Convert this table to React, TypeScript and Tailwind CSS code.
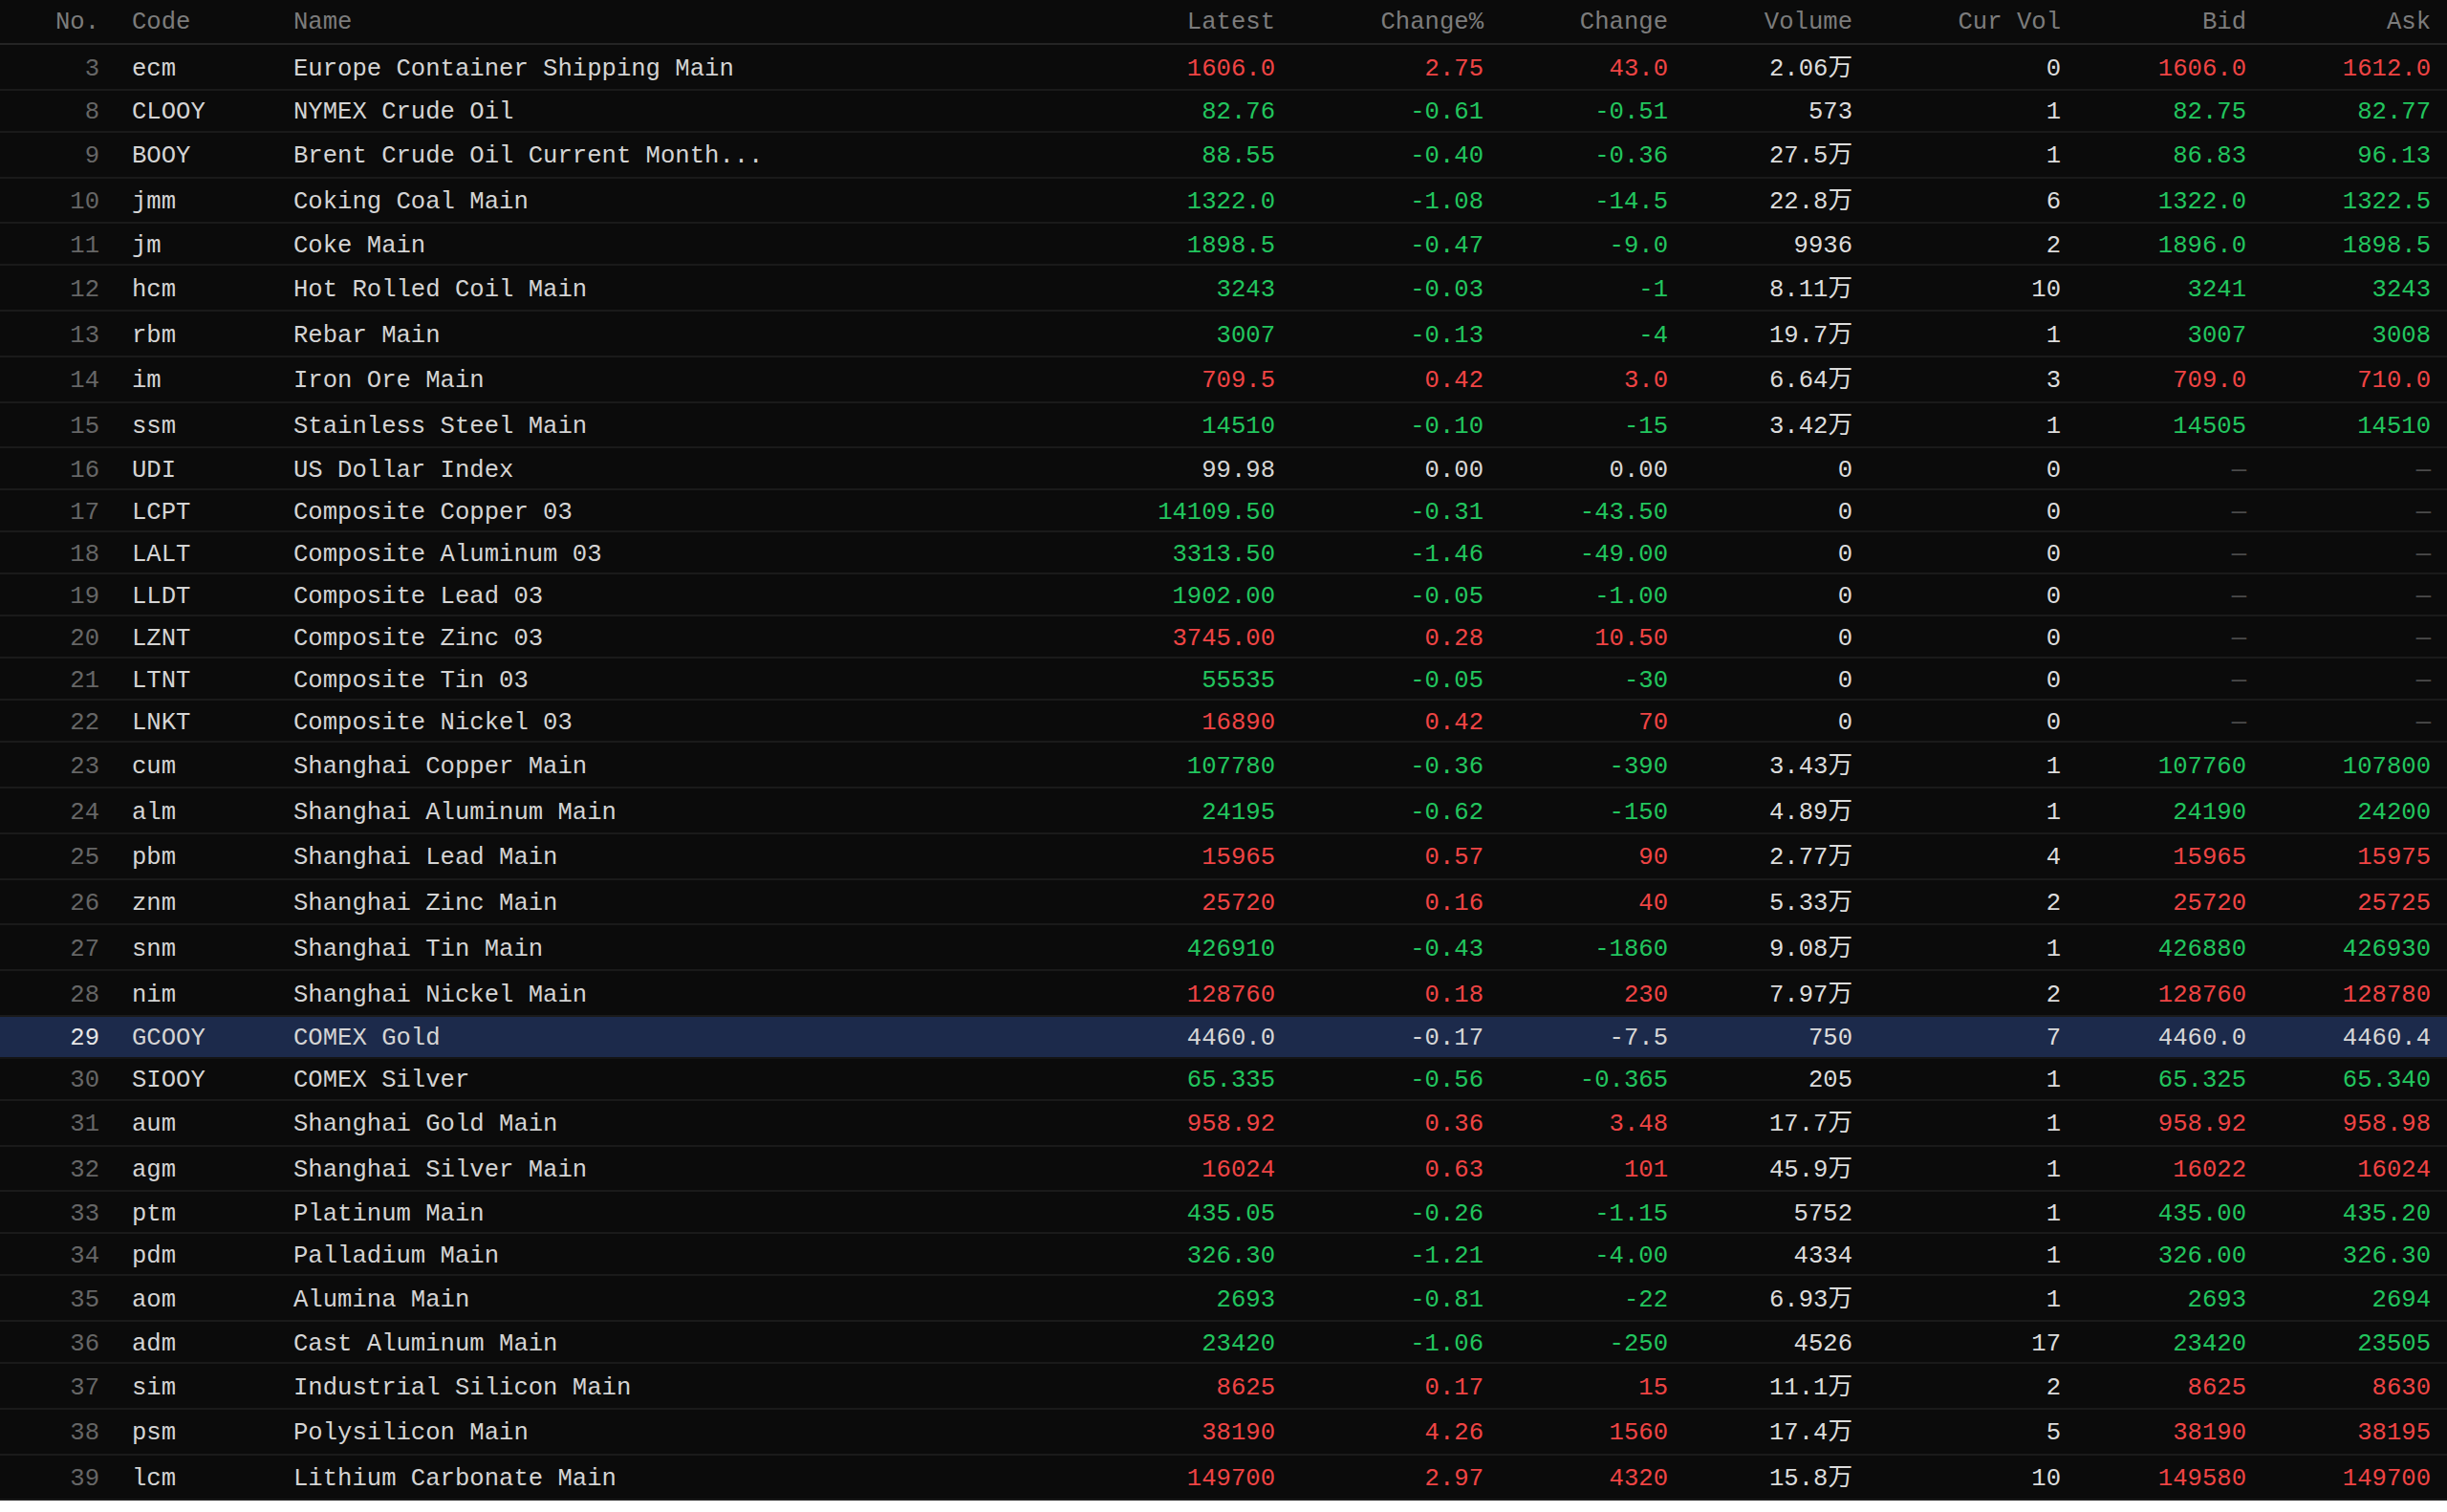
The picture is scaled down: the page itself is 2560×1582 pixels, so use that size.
import React from "react";

type Row = {
  no: number;
  code: string;
  name: string;
  latest: string;
  pct: string;
  chg: string;
  vol: string;
  cur: string;
  bid: string;
  ask: string;
  dir: "up" | "down" | "flat";
};

const rows: Row[] = [
  { no: 3, code: "ecm", name: "Europe Container Shipping Main", latest: "1606.0", pct: "2.75", chg: "43.0", vol: "2.06万", cur: "0", bid: "1606.0", ask: "1612.0", dir: "up" },
  { no: 8, code: "CLOOY", name: "NYMEX Crude Oil", latest: "82.76", pct: "-0.61", chg: "-0.51", vol: "573", cur: "1", bid: "82.75", ask: "82.77", dir: "down" },
  { no: 9, code: "BOOY", name: "Brent Crude Oil Current Month...", latest: "88.55", pct: "-0.40", chg: "-0.36", vol: "27.5万", cur: "1", bid: "86.83", ask: "96.13", dir: "down" },
  { no: 10, code: "jmm", name: "Coking Coal Main", latest: "1322.0", pct: "-1.08", chg: "-14.5", vol: "22.8万", cur: "6", bid: "1322.0", ask: "1322.5", dir: "down" },
  { no: 11, code: "jm", name: "Coke Main", latest: "1898.5", pct: "-0.47", chg: "-9.0", vol: "9936", cur: "2", bid: "1896.0", ask: "1898.5", dir: "down" },
  { no: 12, code: "hcm", name: "Hot Rolled Coil Main", latest: "3243", pct: "-0.03", chg: "-1", vol: "8.11万", cur: "10", bid: "3241", ask: "3243", dir: "down" },
  { no: 13, code: "rbm", name: "Rebar Main", latest: "3007", pct: "-0.13", chg: "-4", vol: "19.7万", cur: "1", bid: "3007", ask: "3008", dir: "down" },
  { no: 14, code: "im", name: "Iron Ore Main", latest: "709.5", pct: "0.42", chg: "3.0", vol: "6.64万", cur: "3", bid: "709.0", ask: "710.0", dir: "up" },
  { no: 15, code: "ssm", name: "Stainless Steel Main", latest: "14510", pct: "-0.10", chg: "-15", vol: "3.42万", cur: "1", bid: "14505", ask: "14510", dir: "down" },
  { no: 16, code: "UDI", name: "US Dollar Index", latest: "99.98", pct: "0.00", chg: "0.00", vol: "0", cur: "0", bid: "—", ask: "—", dir: "flat" },
  { no: 17, code: "LCPT", name: "Composite Copper 03", latest: "14109.50", pct: "-0.31", chg: "-43.50", vol: "0", cur: "0", bid: "—", ask: "—", dir: "down" },
  { no: 18, code: "LALT", name: "Composite Aluminum 03", latest: "3313.50", pct: "-1.46", chg: "-49.00", vol: "0", cur: "0", bid: "—", ask: "—", dir: "down" },
  { no: 19, code: "LLDT", name: "Composite Lead 03", latest: "1902.00", pct: "-0.05", chg: "-1.00", vol: "0", cur: "0", bid: "—", ask: "—", dir: "down" },
  { no: 20, code: "LZNT", name: "Composite Zinc 03", latest: "3745.00", pct: "0.28", chg: "10.50", vol: "0", cur: "0", bid: "—", ask: "—", dir: "up" },
  { no: 21, code: "LTNT", name: "Composite Tin 03", latest: "55535", pct: "-0.05", chg: "-30", vol: "0", cur: "0", bid: "—", ask: "—", dir: "down" },
  { no: 22, code: "LNKT", name: "Composite Nickel 03", latest: "16890", pct: "0.42", chg: "70", vol: "0", cur: "0", bid: "—", ask: "—", dir: "up" },
  { no: 23, code: "cum", name: "Shanghai Copper Main", latest: "107780", pct: "-0.36", chg: "-390", vol: "3.43万", cur: "1", bid: "107760", ask: "107800", dir: "down" },
  { no: 24, code: "alm", name: "Shanghai Aluminum Main", latest: "24195", pct: "-0.62", chg: "-150", vol: "4.89万", cur: "1", bid: "24190", ask: "24200", dir: "down" },
  { no: 25, code: "pbm", name: "Shanghai Lead Main", latest: "15965", pct: "0.57", chg: "90", vol: "2.77万", cur: "4", bid: "15965", ask: "15975", dir: "up" },
  { no: 26, code: "znm", name: "Shanghai Zinc Main", latest: "25720", pct: "0.16", chg: "40", vol: "5.33万", cur: "2", bid: "25720", ask: "25725", dir: "up" },
  { no: 27, code: "snm", name: "Shanghai Tin Main", latest: "426910", pct: "-0.43", chg: "-1860", vol: "9.08万", cur: "1", bid: "426880", ask: "426930", dir: "down" },
  { no: 28, code: "nim", name: "Shanghai Nickel Main", latest: "128760", pct: "0.18", chg: "230", vol: "7.97万", cur: "2", bid: "128760", ask: "128780", dir: "up" },
  { no: 29, code: "GCOOY", name: "COMEX Gold", latest: "4460.0", pct: "-0.17", chg: "-7.5", vol: "750", cur: "7", bid: "4460.0", ask: "4460.4", dir: "flat" },
  { no: 30, code: "SIOOY", name: "COMEX Silver", latest: "65.335", pct: "-0.56", chg: "-0.365", vol: "205", cur: "1", bid: "65.325", ask: "65.340", dir: "down" },
  { no: 31, code: "aum", name: "Shanghai Gold Main", latest: "958.92", pct: "0.36", chg: "3.48", vol: "17.7万", cur: "1", bid: "958.92", ask: "958.98", dir: "up" },
  { no: 32, code: "agm", name: "Shanghai Silver Main", latest: "16024", pct: "0.63", chg: "101", vol: "45.9万", cur: "1", bid: "16022", ask: "16024", dir: "up" },
  { no: 33, code: "ptm", name: "Platinum Main", latest: "435.05", pct: "-0.26", chg: "-1.15", vol: "5752", cur: "1", bid: "435.00", ask: "435.20", dir: "down" },
  { no: 34, code: "pdm", name: "Palladium Main", latest: "326.30", pct: "-1.21", chg: "-4.00", vol: "4334", cur: "1", bid: "326.00", ask: "326.30", dir: "down" },
  { no: 35, code: "aom", name: "Alumina Main", latest: "2693", pct: "-0.81", chg: "-22", vol: "6.93万", cur: "1", bid: "2693", ask: "2694", dir: "down" },
  { no: 36, code: "adm", name: "Cast Aluminum Main", latest: "23420", pct: "-1.06", chg: "-250", vol: "4526", cur: "17", bid: "23420", ask: "23505", dir: "down" },
  { no: 37, code: "sim", name: "Industrial Silicon Main", latest: "8625", pct: "0.17", chg: "15", vol: "11.1万", cur: "2", bid: "8625", ask: "8630", dir: "up" },
  { no: 38, code: "psm", name: "Polysilicon Main", latest: "38190", pct: "4.26", chg: "1560", vol: "17.4万", cur: "5", bid: "38190", ask: "38195", dir: "up" },
  { no: 39, code: "lcm", name: "Lithium Carbonate Main", latest: "149700", pct: "2.97", chg: "4320", vol: "15.8万", cur: "10", bid: "149580", ask: "149700", dir: "up" },
];

const GRID =
  "grid grid-cols-[121px_169px_1fr_200px_218px_193px_193px_218px_194px_193px] items-center";

const FONT = {
  fontFamily: '"Liberation Mono", "Noto Sans CJK SC", monospace',
};

export default function App() {
  return (
    <div className="w-[2560px] bg-[#0b0b0b] text-[25.6px] leading-none" style={FONT}>
      <div className={`${GRID} h-[47px] pt-[3px] border-b-2 border-[#242424] text-[#7c7c7c]`}>
        <div className="pr-[17px] text-right">No.</div>
        <div className="pl-[17px]">Code</div>
        <div className="pl-[17px]">Name</div>
        <div className="pr-[17px] text-right">Latest</div>
        <div className="pr-[17px] text-right">Change%</div>
        <div className="pr-[17px] text-right">Change</div>
        <div className="pr-[17px] text-right">Volume</div>
        <div className="pr-[17px] text-right">Cur Vol</div>
        <div className="pr-[17px] text-right">Bid</div>
        <div className="pr-[17px] text-right">Ask</div>
      </div>
      {rows.map((r) => {
        const sel = r.no === 29;
        const tall = r.vol.includes("万");
        const c =
          r.dir === "up"
            ? "text-[#ef4444]"
            : r.dir === "down"
            ? "text-[#22c55e]"
            : "text-[#d6d6d6]";
        const dash = "text-[#4a4a4a]";
        return (
          <div
            key={r.no}
            className={`${GRID} ${tall ? "h-[47.75px]" : "h-[44px]"} pt-[5px] border-b-2 ${
              sel ? "bg-[#1c2a4b] border-[#141414]" : "border-[#1a1a1a]"
            }`}
          >
            <div className={`pr-[17px] text-right ${sel ? "text-[#e6e6e6]" : "text-[#666666]"}`}>{r.no}</div>
            <div className="pl-[17px] text-[#d4d4d4]">{r.code}</div>
            <div className="pl-[17px] text-[#d4d4d4] whitespace-nowrap">{r.name}</div>
            <div className={`pr-[17px] text-right ${c}`}>{r.latest}</div>
            <div className={`pr-[17px] text-right ${c}`}>{r.pct}</div>
            <div className={`pr-[17px] text-right ${c}`}>{r.chg}</div>
            <div className="pr-[17px] text-right text-[#dcdcdc]">{r.vol}</div>
            <div className="pr-[17px] text-right text-[#dcdcdc]">{r.cur}</div>
            <div className={`pr-[17px] text-right ${r.bid === "—" ? dash : c}`}>{r.bid}</div>
            <div className={`pr-[17px] text-right ${r.ask === "—" ? dash : c}`}>{r.ask}</div>
          </div>
        );
      })}
    </div>
  );
}
